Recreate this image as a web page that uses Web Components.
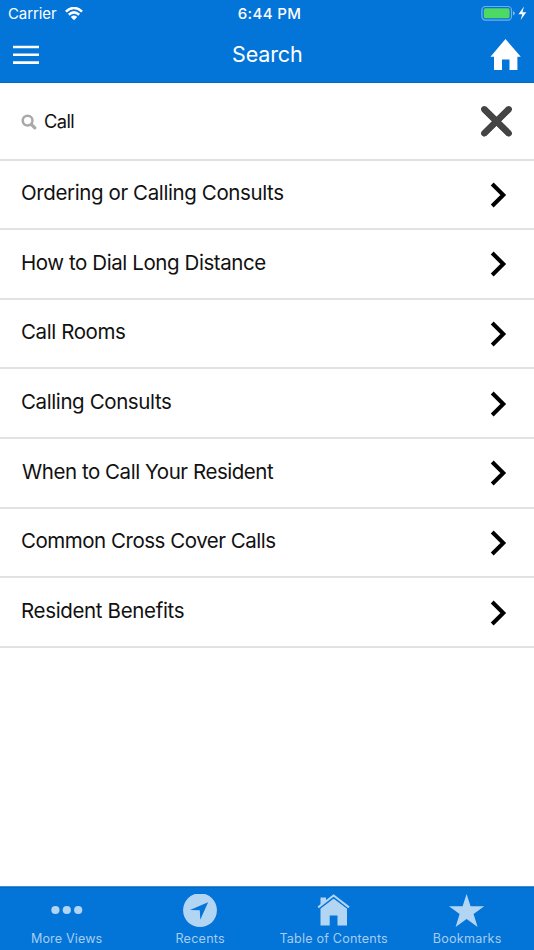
<!DOCTYPE html>
<html lang="en"><head><meta charset="utf-8"><title>Search</title>
<style>html,body{margin:0;height:100%;background:#fff;overflow:hidden}body{font-family:Inter,"Liberation Sans",sans-serif}</style></head>
<body><search-screen></search-screen>
<script>
const define=(name,html,init)=>customElements.define(name,class extends HTMLElement{
  constructor(){super();this.attachShadow({mode:'open'}).innerHTML=html;}
  connectedCallback(){if(init)init(this,this.shadowRoot);}
});
// A single-line label whose tracking is adjusted so its glyphs span the "span" attribute in pixels.
const ctx=document.createElement('canvas').getContext('2d');
define('tracked-label','<style>:host{display:block;white-space:nowrap}span{display:block}</style><span><slot></slot></span>',(el,r)=>{
  const cs=getComputedStyle(el),t=el.textContent;
  ctx.font=cs.fontWeight+' '+cs.fontSize+' '+cs.fontFamily;
  const m=ctx.measureText(t),ink=m.actualBoundingBoxRight+m.actualBoundingBoxLeft,w=+el.getAttribute('span');
  const s=r.querySelector('span');
  s.style.letterSpacing=((w-ink)/(t.length-1)).toFixed(3)+'px';
  s.style.marginLeft=m.actualBoundingBoxLeft.toFixed(2)+'px';
  s.style.width=w+'px';
});
define('status-bar',`<style>:host{display:grid;grid-template-columns:1fr auto 1fr;height:28px;align-items:center;font-size:15px;line-height:28px;color:#fff}
.l{display:flex;align-items:center;gap:8px;padding-left:8px}.r{display:flex;justify-content:flex-end;padding-right:6px}svg{display:block}.t{font-weight:500;padding-left:4px}</style>
<div class="l"><tracked-label span="49">Carrier</tracked-label><svg width="18" height="14" viewBox="0 0 18 14"><g fill="none" stroke="#fff" stroke-width="2.5"><path d="M.9 4.6Q9-2.6 17.1 4.6"/><path d="M3.8 7.7Q9 3.1 14.2 7.7"/></g><path d="M5.8 9.9Q9 7.3 12.2 9.9L9 13.2Z" fill="#fff"/></svg></div>
<tracked-label class="t" span="62.7">6:44 PM</tracked-label>
<div class="r"><svg width="47" height="16" viewBox="0 0 47 16"><rect x=".9" y=".5" width="29.6" height="13.6" rx="3.6" fill="none" stroke="#72afe8" stroke-width="1.2"/><rect x="2.8" y="2.3" width="25.8" height="10" rx="1.6" fill="#4cd964"/><path d="M32 5Q33.8 5.8 33.8 7.3T32 9.6Z" fill="#83b9ea"/><path d="M43 .5L37.5 8.3H41.3L39.6 14L45.3 6.2H41.5Z" fill="#fff"/></svg></div>`);
define('nav-bar',`<style>:host{display:grid;grid-template-columns:1fr auto 1fr;height:55px;box-sizing:border-box;align-items:center;color:#fff;font-size:21.5px;line-height:54px;border-bottom:1px solid #0868bd}
svg{display:block}.m{margin-left:13px}.h{justify-self:end;margin-right:13.5px}tracked-label{margin:-1px 0 1px 0}</style>
<svg class="m" width="26" height="20" viewBox="0 0 26 20"><path d="M0 2H26M0 9.8H26M0 17.6H26" stroke="#fff" stroke-width="2.6"/></svg>
<tracked-label span="68.8">Search</tracked-label>
<svg class="h" width="31" height="32" viewBox="0 0 31 32"><path d="M15.5 0L30.8 17.8H27.4V31H19.5V20.5H12V31H4V17.8H.5Z" fill="#fff"/></svg>`);
define('search-field',`<style>:host{display:flex;height:77.5px;box-sizing:border-box;border-bottom:2px solid #e0e0e1;align-items:center;padding:0 21px 0 20.5px;color:#111;font-size:18.3px;line-height:75px}
svg{display:block}.g{margin:2px 8.5px 0 0}tracked-label{margin-top:1px}.x{margin-left:auto}</style>
<svg class="g" width="16" height="16" viewBox="0 0 16 16"><circle cx="6.6" cy="6.6" r="4.9" fill="none" stroke="#a9a9a9" stroke-width="2.5"/><path d="M10.3 10.3L13.8 13.8" stroke="#a9a9a9" stroke-width="3.2" stroke-linecap="round"/></svg>
<tracked-label span="29.3">Call</tracked-label>
<svg class="x" width="33" height="32" viewBox="0 0 33 32"><path d="M3.9 3.9L29.1 28.7M29.1 3.9L3.9 28.7" stroke="#444" stroke-width="6.4"/><path d="M4.2 4.2L28.8 28.4M28.8 4.2L4.2 28.4" stroke="#444" stroke-width="6.2" stroke-linecap="round"/></svg>`);
define('result-row',`<style>:host{display:flex;height:69.67px;box-sizing:border-box;border-bottom:2px solid #e2e2e3;align-items:center;justify-content:space-between;padding:0 27px 0 22px;color:#111;font-size:20.5px;line-height:26px}
svg{display:block;margin-top:1px}::slotted(*){margin-top:-2.5px}</style><slot></slot>
<svg width="17" height="26" viewBox="0 0 17 26"><path d="M2.2 2L13.3 13L2.2 24" fill="none" stroke="#000" stroke-width="4"/></svg>`);
define('tab-item',`<style>:host{display:flex;flex-direction:column;align-items:center;color:#a5cdf2;font-size:12.6px;line-height:16px;padding-top:5px}.i{height:37px}::slotted(svg){display:block}</style><div class="i"><slot name="icon"></slot></div><slot></slot>`);
define('tab-bar',`<style>:host{display:grid;grid-template-columns:repeat(4,1fr);height:64px;box-sizing:border-box;background:#0374d8;border-top:1px solid #3d8fd6;padding-top:1.5px;box-shadow:inset 0 1px #0868bd}</style>
<tab-item><svg slot="icon" width="36" height="36" viewBox="0 0 36 36" fill="#b3d5f4"><circle cx="6.4" cy="16" r="4.1"/><circle cx="17.8" cy="16" r="4.1"/><circle cx="29.2" cy="16" r="4.1"/></svg><tracked-label span="70.6">More Views</tracked-label></tab-item>
<tab-item><svg slot="icon" width="36" height="36" viewBox="0 0 36 36"><circle cx="18" cy="16.9" r="16.9" fill="#b3d5f4" transform="translate(0 -.7)"/><path d="M26.1 8.3L18.3 25.8L17.8 16.2L8 15.9Z" fill="#0374d8"/></svg><tracked-label span="48.6">Recents</tracked-label></tab-item>
<tab-item><svg slot="icon" width="36" height="36" viewBox="0 0 36 36" fill="#b3d5f4"><path d="M5 14L17.6 4L31 14V31.6H21.5V21.6H13.7V31.6H4.5V14Z"/><path d="M4.5 11V3.5H10V7Z"/><path d="M2.4 14.4L17.6 2.9L33 14.4" fill="none" stroke="#0374d8" stroke-width="2.8"/><path d="M2.2 13.4L17.6 1.4L33 13.4" fill="none" stroke="#b3d5f4" stroke-width="2"/></svg><tracked-label span="108.6">Table of Contents</tracked-label></tab-item>
<tab-item><svg slot="icon" width="36" height="36" viewBox="0 0 36 36"><path d="M17.6 0L21.6 12.3H35.2L24.6 20.1L28.6 32.9L17.6 25.1L6.6 32.9L10.6 20.1L0 12.3H13.6Z" fill="#b3d5f4"/></svg><tracked-label span="67.8">Bookmarks</tracked-label></tab-item>`);
const rows=[['Ordering or Calling Consults',261.2],['How to Dial Long Distance',243.3],['Call Rooms',103],['Calling Consults',149],['When to Call Your Resident',252],['Common Cross Cover Calls',253.3],['Resident Benefits',161.7]];
define('result-list','<style>:host{display:block}</style>'+rows.map(([t,w])=>`<result-row><tracked-label span="${w}">${t}</tracked-label></result-row>`).join(''));
define('search-screen',`<style>:host{display:flex;flex-direction:column;height:950px;background:#fff}header{background:#0374d8}result-list{flex:1}</style><header><status-bar></status-bar><nav-bar></nav-bar></header><search-field></search-field><result-list></result-list><tab-bar></tab-bar>`);
</script></body></html>
